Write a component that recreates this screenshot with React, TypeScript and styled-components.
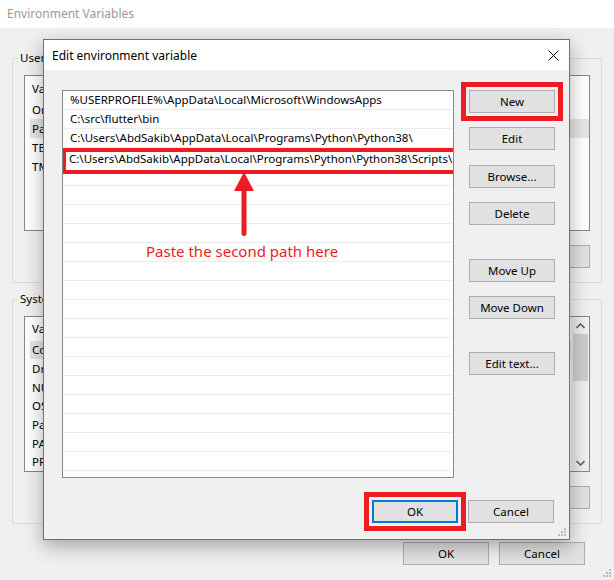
import React from "react";
import styled, { createGlobalStyle } from "styled-components";

const RED = "#ed1c24";

const GlobalStyle = createGlobalStyle`
  html, body { margin: 0; padding: 0; background: #f0f0f0; }
  body {
    font-family: "Segoe UI", "Noto Sans", "DejaVu Sans", sans-serif;
    font-size: 11.5px;
    color: #000;
  }
  * { box-sizing: border-box; }
`;

const Window = styled.div`
  position: relative;
  width: 614px;
  height: 580px;
  overflow: hidden;
  background: #f0f0f0;
  display: flex;
  flex-direction: column;
`;

const TitleBar = styled.div`
  height: 28px;
  flex: none;
  background: #fff;
  display: flex;
  align-items: center;
  padding: 0 0 1px 7px;
  color: #999;
  font-size: 12px;
`;

const Content = styled.div`
  flex: 1;
  display: flex;
  flex-direction: column;
  padding: 0 12px;
`;

const GroupBox = styled.div<{ $mt: number }>`
  margin-top: ${(p) => p.$mt}px;
  border: 1px solid #dcdcdc;
  padding: 0 11px 14px;
  display: flex;
  flex-direction: column;
`;

const GroupLabel = styled.div`
  align-self: flex-start;
  margin: -9px 0 0 -6px;
  padding: 0 2px;
  background: #f0f0f0;
  line-height: 16px;
  white-space: nowrap;
`;

const BgList = styled.div`
  margin-top: 9px;
  height: 156px;
  border: 1px solid #828790;
  background: #fff;
  display: flex;
  overflow: hidden;
`;

const BgListBody = styled.div`
  flex: 1;
  display: flex;
  flex-direction: column;
`;

const BgHeader = styled.div`
  height: 24px;
  display: grid;
  grid-template-columns: 180px 1fr;
  align-items: center;
  padding-left: 7px;
`;

const BgRow = styled.div<{ $sel?: boolean }>`
  height: 19px;
  display: grid;
  grid-template-columns: 173px 1fr;
  align-items: center;
  margin-left: 5px;
  padding-left: 2px;
  background: ${(p) => (p.$sel ? "#e5e5e5" : "transparent")};
  white-space: nowrap;
  overflow: hidden;
`;

const ScrollBar = styled.div`
  width: 18px;
  flex: none;
  background: linear-gradient(to right, #e8e8e8, #f2f2f2);
  display: flex;
  flex-direction: column;
  align-items: center;
`;

const ScrollArrow = styled.div`
  height: 17px;
  width: 100%;
  display: flex;
  align-items: center;
  justify-content: center;
`;

const ScrollThumb = styled.div`
  width: 15px;
  height: 47px;
  background: #cdcdcd;
`;

const ScrollTrack = styled.div`
  flex: 1;
`;

const ButtonRow = styled.div<{ $mt: number; $pr?: number }>`
  display: flex;
  justify-content: flex-end;
  gap: 10px;
  margin-top: ${(p) => p.$mt}px;
  padding-right: ${(p) => p.$pr ?? 0}px;
`;

const Button = styled.button<{ $mt?: number; $mark?: boolean; $default?: boolean }>`
  width: 86px;
  height: 23px;
  flex: none;
  margin-top: ${(p) => p.$mt ?? 0}px;
  padding: 0;
  font: inherit;
  color: #000;
  background: #e1e1e1;
  border: ${(p) => (p.$default ? "2px solid #0078d7" : "1px solid #adadad")};
  outline: ${(p) => (p.$mark ? `5px solid ${RED}` : "none")};
  outline-offset: 3px;
  white-space: nowrap;
`;

const Dialog = styled.div`
  position: absolute;
  left: 43px;
  top: 39px;
  width: 527px;
  height: 501px;
  border: 1px solid #707070;
  background: #f0f0f0;
  display: flex;
  flex-direction: column;
  box-shadow: 0 6px 18px rgba(0, 0, 0, 0.32);
`;

const DlgTitle = styled.div`
  height: 30px;
  flex: none;
  background: #fff;
  display: flex;
  align-items: center;
  justify-content: space-between;
  padding: 0 10px 0 8px;
  font-size: 12px;
`;

const DlgBody = styled.div`
  flex: 1;
  display: flex;
  flex-direction: column;
  padding: 20px 14px 16px 18px;
`;

const DlgMain = styled.div`
  display: flex;
  gap: 15px;
`;

const PathList = styled.div`
  position: relative;
  width: 392px;
  height: 388px;
  border: 1px solid #828790;
  background: #fff;
  overflow: hidden;
`;

const PathRow = styled.div`
  position: relative;
  height: 19px;
  border-bottom: 1px solid #ececec;
  padding-left: 7px;
  line-height: 18px;
  white-space: nowrap;
`;

const EditBox = styled.div`
  position: absolute;
  left: -1px;
  right: -5px;
  top: 0;
  height: 26px;
  border: 4px solid ${RED};
  background: #fff;
  padding-left: 3px;
  line-height: 14px;
  display: flex;
  align-items: flex-start;
  white-space: nowrap;
`;

const Caret = styled.span`
  display: inline-block;
  width: 1px;
  height: 15px;
  background: #000;
  margin-left: 1px;
`;

const ButtonCol = styled.div`
  display: flex;
  flex-direction: column;
  width: 86px;
`;

const Arrow = styled.svg`
  position: absolute;
  left: 170px;
  top: 79px;
`;

const Annotation = styled.div`
  position: absolute;
  left: 83px;
  top: 150px;
  color: ${RED};
  font-size: 15px;
  line-height: 20px;
  white-space: nowrap;
`;

const Grip = styled.svg`
  position: absolute;
  right: 2px;
  bottom: 2px;
`;

const GripIcon = () => (
  <Grip width="10" height="10" viewBox="0 0 10 10">
    {[
      [7, 1],
      [4, 4],
      [7, 4],
      [1, 7],
      [4, 7],
      [7, 7],
    ].map(([x, y], i) => (
      <rect key={i} x={x} y={y} width="2" height="2" fill="#b9b9b9" />
    ))}
  </Grip>
);

const paths = [
  "%USERPROFILE%\\AppData\\Local\\Microsoft\\WindowsApps",
  "C:\\src\\flutter\\bin",
  "C:\\Users\\AbdSakib\\AppData\\Local\\Programs\\Python\\Python38\\",
];
const editing = "C:\\Users\\AbdSakib\\AppData\\Local\\Programs\\Python\\Python38\\Scripts\\";

const userVars = [
  ["OneDrive", "C:\\Users\\AbdSakib\\OneDrive"],
  ["Path", "C:\\Users\\AbdSakib\\AppData\\Local\\Microsoft\\WindowsApps;"],
  ["TEMP", "C:\\Users\\AbdSakib\\AppData\\Local\\Temp"],
  ["TMP", "C:\\Users\\AbdSakib\\AppData\\Local\\Temp"],
];

const sysVars = [
  ["ComSpec", "C:\\Windows\\system32\\cmd.exe"],
  ["DriverData", "C:\\Windows\\System32\\Drivers\\DriverData"],
  ["NUMBER_OF_PROCESSORS", "4"],
  ["OS", "Windows_NT"],
  ["Path", "C:\\Windows\\system32;C:\\Windows;"],
  ["PATHEXT", ".COM;.EXE;.BAT;.CMD;.VBS;.VBE;.JS"],
  ["PROCESSOR_ARCHITECTURE", "AMD64"],
];

export default function App() {
  return (
    <>
      <GlobalStyle />
      <Window>
        <TitleBar>Environment Variables</TitleBar>
        <Content>
          <GroupBox $mt={30}>
            <GroupLabel>User variables for AbdSakib</GroupLabel>
            <BgList>
              <BgListBody>
                <BgHeader>
                  <span>Variable</span>
                  <span>Value</span>
                </BgHeader>
                {userVars.map(([k, v]) => (
                  <BgRow key={k} $sel={k === "Path"}>
                    <span>{k}</span>
                    <span>{v}</span>
                  </BgRow>
                ))}
              </BgListBody>
            </BgList>
            <ButtonRow $mt={14}>
              <Button>New...</Button>
              <Button>Edit...</Button>
              <Button>Delete</Button>
            </ButtonRow>
          </GroupBox>
          <GroupBox $mt={16}>
            <GroupLabel>System variables</GroupLabel>
            <BgList>
              <BgListBody>
                <BgHeader>
                  <span>Variable</span>
                  <span>Value</span>
                </BgHeader>
                {sysVars.map(([k, v]) => (
                  <BgRow key={k} $sel={k === "ComSpec"}>
                    <span>{k}</span>
                    <span>{v}</span>
                  </BgRow>
                ))}
              </BgListBody>
              <ScrollBar>
                <ScrollArrow>
                  <svg width="9" height="6" viewBox="0 0 9 6">
                    <path d="M0.5 5 L4.5 1 L8.5 5" stroke="#606060" strokeWidth="1.6" fill="none" />
                  </svg>
                </ScrollArrow>
                <ScrollThumb />
                <ScrollTrack />
                <ScrollArrow>
                  <svg width="9" height="6" viewBox="0 0 9 6">
                    <path d="M0.5 1 L4.5 5 L8.5 1" stroke="#606060" strokeWidth="1.6" fill="none" />
                  </svg>
                </ScrollArrow>
              </ScrollBar>
            </BgList>
            <ButtonRow $mt={14}>
              <Button>New...</Button>
              <Button>Edit...</Button>
              <Button>Delete</Button>
            </ButtonRow>
          </GroupBox>
          <ButtonRow $mt={18} $pr={17}>
            <Button>OK</Button>
            <Button>Cancel</Button>
          </ButtonRow>
        </Content>
        <GripIcon />

        <Dialog>
          <DlgTitle>
            <span>Edit environment variable</span>
            <svg width="11" height="11" viewBox="0 0 11 11">
              <path d="M0.5 0.5 L10.5 10.5 M10.5 0.5 L0.5 10.5" stroke="#000" strokeWidth="1" />
            </svg>
          </DlgTitle>
          <DlgBody>
            <DlgMain>
              <PathList>
                {paths.map((p) => (
                  <PathRow key={p}>{p}</PathRow>
                ))}
                <PathRow>
                  <EditBox>
                    <span>{editing}</span>
                    <Caret />
                  </EditBox>
                </PathRow>
                {Array.from({ length: 17 }).map((_, i) => (
                  <PathRow key={i} />
                ))}
                <Arrow width="22" height="68" viewBox="0 0 22 68">
                  <polygon points="11,2 21,21 1,21" fill={RED} />
                  <rect x="8.5" y="18" width="5" height="48" rx="2.5" fill={RED} />
                </Arrow>
                <Annotation>Paste the second path here</Annotation>
              </PathList>
              <ButtonCol>
                <Button $mark>New</Button>
                <Button $mt={14}>Edit</Button>
                <Button $mt={15}>Browse...</Button>
                <Button $mt={14}>Delete</Button>
                <Button $mt={34}>Move Up</Button>
                <Button $mt={14}>Move Down</Button>
                <Button $mt={33}>Edit text...</Button>
              </ButtonCol>
            </DlgMain>
            <ButtonRow $mt={22} $pr={1}>
              <Button $default $mark>
                OK
              </Button>
              <Button>Cancel</Button>
            </ButtonRow>
          </DlgBody>
          <GripIcon />
        </Dialog>
      </Window>
    </>
  );
}
